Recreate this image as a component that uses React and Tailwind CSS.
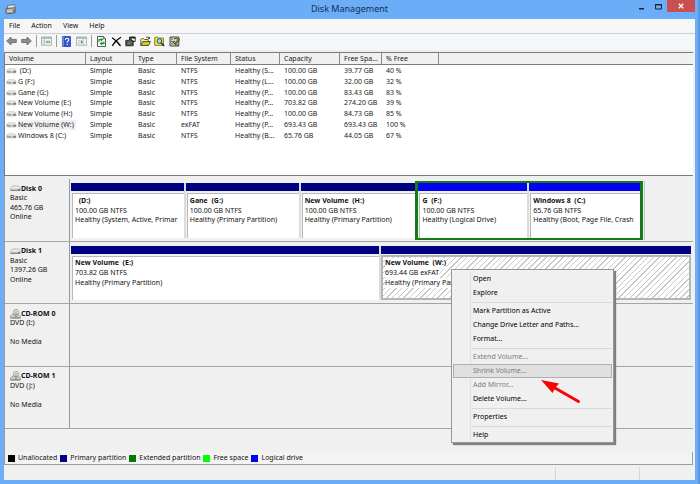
import React from "react";

const columns = ["Volume", "Layout", "Type", "File System", "Status", "Capacity", "Free Spa...", "% Free", ""];

const volumes = [
  { name: "\u00a0(D:)", fs: "NTFS", status: "Healthy (S...", capacity: "100.00 GB", free: "39.77 GB", pct: "40 %" },
  { name: "G (F:)", fs: "NTFS", status: "Healthy (L...", capacity: "100.00 GB", free: "32.00 GB", pct: "32 %" },
  { name: "Gane (G:)", fs: "NTFS", status: "Healthy (P...", capacity: "100.00 GB", free: "83.43 GB", pct: "83 %" },
  { name: "New Volume (E:)", fs: "NTFS", status: "Healthy (P...", capacity: "703.82 GB", free: "274.20 GB", pct: "39 %" },
  { name: "New Volume (H:)", fs: "NTFS", status: "Healthy (P...", capacity: "100.00 GB", free: "84.73 GB", pct: "85 %" },
  { name: "New Volume (W:)", fs: "exFAT", status: "Healthy (P...", capacity: "693.43 GB", free: "693.43 GB", pct: "100 %", selected: true },
  { name: "Windows 8 (C:)", fs: "NTFS", status: "Healthy (B...", capacity: "65.76 GB", free: "44.05 GB", pct: "67 %" },
];

const legend = [
  { label: "Unallocated", color: "bg-black" },
  { label: "Primary partition", color: "bg-[#000082]" },
  { label: "Extended partition", color: "bg-[#007d00]" },
  { label: "Free space", color: "bg-[#00ff00]" },
  { label: "Logical drive", color: "bg-[#0000f5]" },
];

const menuItems = [
  { label: "Open" },
  { label: "Explore" },
  null,
  { label: "Mark Partition as Active" },
  { label: "Change Drive Letter and Paths..." },
  { label: "Format..." },
  null,
  { label: "Extend Volume...", disabled: true },
  { label: "Shrink Volume...", disabled: true, highlighted: true },
  { label: "Add Mirror...", disabled: true },
  { label: "Delete Volume..." },
  null,
  { label: "Properties" },
  null,
  { label: "Help" },
];

function DriveIcon() {
  return (
    <svg className="w-[11px] h-[6px] shrink-0" viewBox="0 0 11 6">
      <path d="M2.300 .900h6.200l1.500 1.800v1.500l-.7.700H1.500l-.7-.7V2.700z" fill="#d2d2d2" stroke="#a3a3a3" strokeWidth=".6" />
      <path d="M1 3h4v1.600H1.500L1 4z" fill="#a2a2a2" />
      <path d="M2.800 1.200h5l.8 1.100H2z" fill="#f4f4f4" />
      <path d="M7.300 3.100h2.500v1.400H7.300z" fill="#666" />
    </svg>
  );
}

function DiskIcon() {
  return (
    <svg className="w-[11px] h-[7px] shrink-0" viewBox="0 0 11 7">
      <path d="M2.400 1h6.400l1.600 2.400v2H.6v-2z" fill="#ececec" stroke="#999" strokeWidth=".6" />
      <path d="M.6 3.700h9.800v1.700H.6z" fill="#c0c0c0" />
      <path d="M.6 5.500h9.800" stroke="#6d6d6d" strokeWidth=".7" />
      <path d="M8 4.100h1.600v.8H8z" fill="#3f7f4f" />
    </svg>
  );
}

function CdIcon() {
  return (
    <svg className="w-[11px] h-[10px] shrink-0" viewBox="0 0 11 10">
      <ellipse cx="6" cy="3.300" rx="2.700" ry="3" fill="#dfe4df" stroke="#8b958b" strokeWidth=".7" />
      <circle cx="6" cy="3.200" r=".8" fill="#fff" stroke="#777" strokeWidth=".5" />
      <path d="M2.200 5.200h6.600l1.600 1.700v2H.6v-2z" fill="#cfcfcf" stroke="#8c8c8c" strokeWidth=".7" />
      <path d="M.6 9h9.800" stroke="#666" strokeWidth=".7" />
      <path d="M5.200 4.600v3h1.600v-3" fill="none" stroke="#6f8f6f" strokeWidth=".7" />
    </svg>
  );
}

function ArrowIcon({ flip }) {
  return (
    <svg className={flip ? "w-[11px] h-[10px] -scale-x-100" : "w-[11px] h-[10px]"} viewBox="0 0 11 10">
      <path d="M.7 5L5 1v2.400h5.300v3.200H5V9z" fill="#8d8d8d" stroke="#5f5f5f" strokeWidth=".8" strokeLinejoin="round" />
    </svg>
  );
}

function PaneIcon({ right }) {
  return (
    <svg className="w-[11px] h-[10px]" viewBox="0 0 11 10">
      <path d="M.5 1h10v8.300H.5z" fill="#f4f4f0" stroke="#a3a6a8" strokeWidth=".8" />
      <path d="M.5 1h10v1.800H.5z" fill="#9fb4c4" />
      <path d={right ? "M7 3v6" : "M3.500 3v6"} stroke="#a3a6a8" strokeWidth=".7" />
      <path d={right ? "M1.800 4.500h3M1.800 6h3M1.800 7.500h3" : "M1.200 4.500h1.500M1.200 6h1.500M1.200 7.500h1.500"} stroke="#b9b9b9" strokeWidth=".6" />
      <path d={right ? "M5 4.200L7.200 6 5 7.800z" : "M6.600 4.200L4.600 6l2 1.800zM7.600 4.200L9.600 6l-2 1.800z"} fill="#4ca352" />
    </svg>
  );
}

function HelpIcon() {
  return (
    <svg className="w-[11px] h-[11px]" viewBox="0 0 11 11">
      <path d="M1.500.500h8v10h-8z" fill="#2f55cf" stroke="#1d3590" strokeWidth=".7" />
      <path d="M1.500.500h1.300v10H1.500z" fill="#7d97e6" />
      <path d="M4.400 3.900c0-2.300 3.400-2.200 3.400-.2C7.800 5 6.200 5 6.200 6.600" fill="none" stroke="#fff" strokeWidth="1.100" />
      <path d="M5.600 7.700h1.200v1.200H5.600z" fill="#fff" />
    </svg>
  );
}

function RefreshIcon() {
  return (
    <svg className="w-[11px] h-[11px]" viewBox="0 0 11 11">
      <path d="M1.500.500h5.700l2.300 2.300v7.700h-8z" fill="#fff" stroke="#333" strokeWidth=".8" />
      <path d="M7.200.500v2.300h2.300" fill="none" stroke="#333" strokeWidth=".7" />
      <path d="M3.100 5.800V3.700h2.300M7.900 5.400v2.100H5.600" fill="none" stroke="#159a2b" strokeWidth="1.300" />
      <path d="M4.800 1.800l2.600 1.900-2.600 1.900zM6.200 5.600L3.600 7.500l2.600 1.900z" fill="#159a2b" />
    </svg>
  );
}

function DeleteIcon() {
  return (
    <svg className="w-[11px] h-[11px]" viewBox="0 0 11 11">
      <path d="M1.500 2C4 3.500 7 6.500 9.200 9.500M9.500 1.500C6.500 3.200 3.500 6 1.500 9.500" fill="none" stroke="#000" strokeWidth="1.300" strokeLinecap="round" />
    </svg>
  );
}

function PropertiesIcon() {
  return (
    <svg className="w-[11px] h-[11px]" viewBox="0 0 11 11">
      <path d="M4.500 1h5.700v4.500H4.500z" fill="#fff" stroke="#222" strokeWidth=".9" />
      <path d="M4.500 1h5.700v1.600H4.500z" fill="#222" />
      <path d="M.8 4.300h3l1-1.200h1.600v1.400h1.800v5.300H.8z" fill="#4a4a4a" stroke="#222" strokeWidth=".8" />
      <path d="M2.500 6h4M2.500 7.600h4" stroke="#aaa" strokeWidth=".6" />
    </svg>
  );
}

function OpenIcon() {
  return (
    <svg className="w-[11px] h-[11px]" viewBox="0 0 11 11">
      <path d="M.8 9.500V3.500l.8-.8h2l.8.800h3.800v2" fill="#fff79a" stroke="#333" strokeWidth=".8" />
      <path d="M.8 9.500l2-4h7.700l-2 4z" fill="#d3c722" stroke="#333" strokeWidth=".8" />
      <path d="M6 1.800c1.200-1.200 2.600-.8 3.300.400M9.600.900v1.600H8" fill="none" stroke="#222" strokeWidth=".8" />
    </svg>
  );
}

function FindIcon() {
  return (
    <svg className="w-[11px] h-[11px]" viewBox="0 0 11 11">
      <path d="M.7 9.300V1.800l.7-.7h2.200l.8.900h5v7.300z" fill="#f3e34b" stroke="#6f6500" strokeWidth=".8" />
      <circle cx="5.400" cy="5" r="2.300" fill="#8fe3f5" stroke="#245" strokeWidth=".9" />
      <path d="M7.100 6.700l3 3.200" stroke="#1a2c7a" strokeWidth="1.500" />
    </svg>
  );
}

function SettingsIcon() {
  return (
    <svg className="w-[11px] h-[11px]" viewBox="0 0 11 11">
      <path d="M1 1h8.800v9H1z" fill="#d7d7c0" stroke="#333" strokeWidth=".9" />
      <path d="M2.200 3h1.600M2.200 5.400h1.600M2.200 7.900h1.600M5 2.600h3.800" stroke="#333" strokeWidth=".9" />
      <path d="M4.300 5.300l2 2.300L10.300 3" fill="none" stroke="#222" strokeWidth="2" />
      <path d="M4.500 5.400l1.800 1.900L10 3.200" fill="none" stroke="#e9d52e" strokeWidth=".9" />
      <path d="M6 9h3" stroke="#333" strokeWidth=".8" />
    </svg>
  );
}

function ToolButton({ label, children }) {
  return (
    <button type="button" aria-label={label} className="flex w-[11px] h-3 items-center justify-center">
      {children}
    </button>
  );
}

function Divider() {
  return <div className="w-px h-3 bg-[#9b9b9b]"></div>;
}

function Toolbar() {
  return (
    <div className="flex h-[18px] items-start gap-1 bg-[#f5f6f7] border-b-2 border-[#eeeeee] pl-[2px] pt-px">
      <div className="flex w-[26px] justify-between">
        <ToolButton label="Back"><ArrowIcon /></ToolButton>
        <ToolButton label="Forward"><ArrowIcon flip /></ToolButton>
      </div>
      <Divider />
      <ToolButton label="Show or hide console tree"><PaneIcon /></ToolButton>
      <Divider />
      <div className="flex w-[26px] justify-between">
        <ToolButton label="Help"><HelpIcon /></ToolButton>
        <ToolButton label="Show or hide action pane"><PaneIcon right /></ToolButton>
      </div>
      <Divider />
      <div className="flex w-[84px] justify-between">
        <ToolButton label="Refresh"><RefreshIcon /></ToolButton>
        <ToolButton label="Delete"><DeleteIcon /></ToolButton>
        <ToolButton label="Properties"><PropertiesIcon /></ToolButton>
        <ToolButton label="Open"><OpenIcon /></ToolButton>
        <ToolButton label="Explore"><FindIcon /></ToolButton>
        <ToolButton label="Settings"><SettingsIcon /></ToolButton>
      </div>
    </div>
  );
}

function TitleBar() {
  return (
    <header className="relative flex h-[19px] items-start justify-center">
      <svg className="absolute left-px top-1 w-[11px] h-[11px]" viewBox="0 0 11 11">
        <path d="M2.500 1.500l7-.8.7 3.500-7.500.8z" fill="#e6e6e6" stroke="#555" strokeWidth=".7" />
        <path d="M1 4.500l8.500-.8.7 1v4L2 9.800l-1-1z" fill="#a5a5a5" stroke="#4b4b4b" strokeWidth=".8" />
        <path d="M2 6.200l5.500-.4M2 7.800l5.500-.4" stroke="#e8e8e8" strokeWidth=".7" />
        <path d="M8.300 6h1v1.200h-1z" fill="#333" />
      </svg>
      <h1 className="text-[9px] leading-[18px] text-[#14304f]">Disk Management</h1>
      <div className="absolute right-0 top-0 flex h-3">
        <button type="button" aria-label="Minimize" className="flex w-[17px] items-center justify-center">
          <svg className="w-[7px] h-[7px]" viewBox="0 0 7 7"><path d="M1 5h5v1.500H1z" fill="#12233a" /></svg>
        </button>
        <button type="button" aria-label="Maximize" className="flex w-[17px] items-center justify-center">
          <svg className="w-[7px] h-[7px]" viewBox="0 0 7 7">
            <path d="M.5 1.500h6v4.500h-6z" fill="none" stroke="#12233a" />
            <path d="M0 1h7v1.400H0z" fill="#12233a" />
          </svg>
        </button>
        <button type="button" aria-label="Close" className="flex w-7 items-center justify-center bg-[#c94f50]">
          <svg className="w-[6px] h-[6px]" viewBox="0 0 6 6"><path d="M.8.8l4.400 4.400M5.200.8L.8 5.200" stroke="#fff" strokeWidth="1.300" /></svg>
        </button>
      </div>
    </header>
  );
}

function VolumeColumns() {
  return (
    <colgroup>
      <col className="w-[81px]" />
      <col className="w-[48px]" />
      <col className="w-[43px]" />
      <col className="w-[54px]" />
      <col className="w-[49px]" />
      <col className="w-[60px]" />
      <col className="w-[42px]" />
      <col className="w-[57px]" />
      <col />
    </colgroup>
  );
}

function VolumeTable() {
  return (
    <div className="mr-[2px] h-[124px] border-t border-l border-b border-[#7b7b7b] bg-white">
      <table className="w-full table-fixed border-separate border-spacing-0 text-left text-[#222]">
        <VolumeColumns />
        <thead>
          <tr className="h-3 bg-[#f0f0f0]">
            {columns.map((c, i) => (
              <th
                key={i}
                className={
                  "border-b border-b-[#7b7b7b] p-0 pl-1 font-normal leading-[11px] whitespace-nowrap " +
                  (i < 8 ? "border-r border-r-[#8b8b8b]" : "")
                }
              >
                {c}
              </th>
            ))}
          </tr>
        </thead>
      </table>
      {/* Rows share the height evenly */}
      <table className="mt-px h-[75px] w-full table-fixed border-separate border-spacing-0 text-[#222]">
        <VolumeColumns />
        <tbody>
          {volumes.map((v) => (
            <tr key={v.name} className="leading-[10px] whitespace-nowrap">
              <td className="p-0">
                <div className="flex items-center gap-px pl-px">
                  <DriveIcon />
                  <span className={v.selected ? "bg-[#f0f0f0] pr-[2px]" : ""}>{v.name}</span>
                </div>
              </td>
              <td className="p-0 pl-1">Simple</td>
              <td className="p-0 pl-1">Basic</td>
              <td className="p-0 pl-1">{v.fs}</td>
              <td className="p-0 pl-1">{v.status}</td>
              <td className="p-0 pl-1">{v.capacity}</td>
              <td className="p-0 pl-1">{v.free}</td>
              <td className="p-0 pl-1">{v.pct}</td>
              <td className="p-0"></td>
            </tr>
          ))}
        </tbody>
      </table>
    </div>
  );
}

function Partition({ name, size, status, logical, hatched }) {
  const line = hatched ? "bg-white" : "";

  return (
    <div className="flex min-w-0 flex-col border-r-2 border-[#dcdcdc] last:border-r-0">
      <div className={logical ? "h-2 bg-[#0000f5]" : "h-2 bg-[#000082]"}></div>
      <div
        className={
          "flex-1 overflow-hidden pt-[2px] " +
          (hatched
            ? "mt-px border-2 border-[#b5b5b5] pl-[2px] bg-[repeating-linear-gradient(135deg,#ffffff_0px,#ffffff_3px,#c9c9c9_3px,#c9c9c9_4px)]"
            : "mt-[2px] ml-px border-t border-l border-[#b8b8b8] pl-[2px] bg-white")
        }
      >
        <div className="grid h-[29px] w-max grid-rows-3 items-center justify-items-start leading-[10px] whitespace-pre">
          <b className={line}>{name}</b>
          <span className={line}>{size}</span>
          <span className={line}>{status}</span>
        </div>
      </div>
    </div>
  );
}

function DiskRow({ icon, name, lines, children }) {
  return (
    <section className="flex min-h-0 border-b border-[#a5a5a5]">
      <div className="w-[65px] shrink-0 border-r border-[#9a9a9a] pl-[5px] pt-[5px]">
        <div className="grid h-[38px] grid-rows-4 items-center leading-[10px]">
          <div className="flex items-center">
            {icon}
            <b className="whitespace-nowrap">{name}</b>
          </div>
          {lines.map((l, i) => (
            <span key={i}>{l}</span>
          ))}
        </div>
      </div>
      <div className="grid min-w-0 flex-1 pl-px pt-[2px] pb-px">{children}</div>
    </section>
  );
}

function DiskPane() {
  return (
    <div className="grid h-[250px] grid-rows-4">
      <DiskRow icon={<DiskIcon />} name="Disk 0" lines={["Basic", "465.76 GB", "Online"]}>
        <div className="grid grid-cols-[345fr_228fr_50fr]">
          <div className="grid grid-cols-3 py-[2px]">
            <Partition name="  (D:)" size="100.00 GB NTFS" status="Healthy (System, Active, Primar" />
            <Partition name="Gane  (G:)" size="100.00 GB NTFS" status="Healthy (Primary Partition)" />
            <Partition name="New Volume  (H:)" size="100.00 GB NTFS" status="Healthy (Primary Partition)" />
          </div>
          <div className="grid grid-cols-2 border-x-[3px] border-y-2 border-[#137c17]">
            <Partition logical name="G  (F:)" size="100.00 GB NTFS" status="Healthy (Logical Drive)" />
            <Partition logical name="Windows 8  (C:)" size="65.76 GB NTFS" status="Healthy (Boot, Page File, Crash" />
          </div>
          <div className="ml-px border-l border-[#c4c4c4]"></div>
        </div>
      </DiskRow>
      <DiskRow icon={<DiskIcon />} name="Disk 1" lines={["Basic", "1397.26 GB", "Online"]}>
        <div className="mr-[2px] grid grid-cols-2 py-[2px]">
          <Partition name="New Volume  (E:)" size="703.82 GB NTFS" status="Healthy (Primary Partition)" />
          <Partition hatched name="New Volume  (W:)" size="693.44 GB exFAT" status="Healthy (Primary Partition)" />
        </div>
      </DiskRow>
      <DiskRow icon={<CdIcon />} name="CD-ROM 0" lines={["DVD (I:)", "", "No Media"]} />
      <DiskRow icon={<CdIcon />} name="CD-ROM 1" lines={["DVD (J:)", "", "No Media"]} />
    </div>
  );
}

function ContextMenu() {
  return (
    <div
      role="menu"
      className="absolute left-[451px] top-[269px] w-[163px] border border-[#979797] bg-[#f0f0f0] px-px pt-[2px] shadow-[2px_2px_1px_#808080]"
    >
      <div className="absolute inset-y-[2px] left-[18px] w-px bg-[#e0e0e0]"></div>
      {menuItems.map((item, i) =>
        item ? (
          <button
            key={i}
            type="button"
            role="menuitem"
            disabled={item.disabled}
            className={
              "relative block h-[14px] w-full border pl-[19px] text-left leading-3 whitespace-nowrap " +
              (item.highlighted ? "border-[#b0b0b0] bg-[#dedede]/90 " : "border-transparent ") +
              (item.disabled ? "text-[#7d7d7d]" : "text-black")
            }
          >
            {item.label}
          </button>
        ) : (
          <div key={i} role="separator" className="ml-[19px] flex h-1 items-center">
            <div className="h-px w-full bg-[#d9d9d9]"></div>
          </div>
        )
      )}
      <svg className="absolute left-[88px] top-[109px] h-[26px] w-[42px]" viewBox="0 0 42 26">
        <path d="M15 9L38.500 22.500" stroke="#f80404" strokeWidth="3" strokeLinecap="round" />
        <path d="M1 1l18 3.500-3.500 4-3 5.500z" fill="#f80404" />
      </svg>
    </div>
  );
}

export default function App() {
  return (
    <div className="relative flex min-h-screen flex-col overflow-hidden border-r-2 border-[#5c94dc] bg-[#6badf6] pb-1 pl-1 pr-[3px] font-['Noto_Sans','Open_Sans',sans-serif] text-[7px] text-[#111]">
      <TitleBar />
      <main className="flex flex-1 flex-col bg-[#f0f0f0]">
        <nav className="flex h-[15px] items-center gap-[11px] border-b border-[#cfcfcf] bg-[#f5f6f7] pl-[5px] leading-[14px]">
          <button type="button">File</button>
          <button type="button">Action</button>
          <button type="button">View</button>
          <button type="button">Help</button>
        </nav>
        <Toolbar />
        <VolumeTable />
        <div className="mr-[2px] flex flex-1 flex-col border-b border-l border-[#9b9b9b] pt-[3px]">
          <DiskPane />
          <div className="mt-auto flex h-3 items-center gap-[3px] border-r border-[#a0a0a0] bg-[#f3f3f3] pl-[3px]">
            {legend.map((l) => (
              <div key={l.label} className="flex items-center gap-[3px]">
                <span className={"h-[7px] w-[7px] " + l.color}></span>
                <span className="leading-[10px] whitespace-nowrap">{l.label}</span>
              </div>
            ))}
          </div>
        </div>
        <footer className="flex h-[15px] items-stretch pt-[2px]">
          <div className="flex-1 border-r border-[#d5d5d5]"></div>
          <div className="w-[84px] border-r border-[#d5d5d5]"></div>
          <div className="w-[55px]"></div>
        </footer>
      </main>
      <ContextMenu />
    </div>
  );
}
